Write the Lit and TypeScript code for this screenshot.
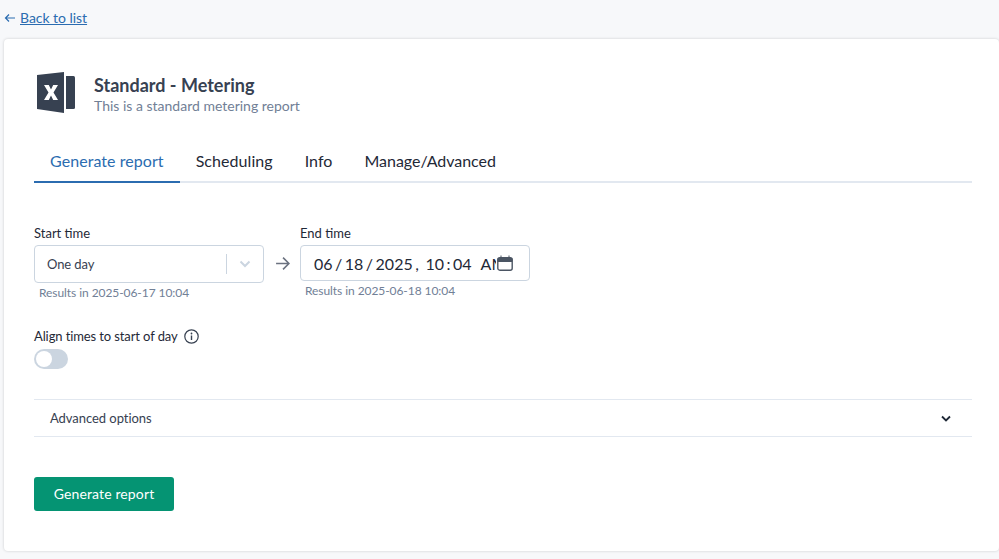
import { LitElement, html, css } from "lit";
import { customElement } from "lit/decorators.js";

@customElement("app-root")
export class AppRoot extends LitElement {
  static styles = css`
    :host { display: block; height: 559px; overflow: hidden; background: #f7f8fa; font-family: Lato, sans-serif; color: #1f2937; box-sizing: border-box; padding: 9px 0 0 4px; }
    * { box-sizing: border-box; }
    .back { display: flex; align-items: center; height: 18px; font-size: 14px; color: #2b6cb0; line-height: 18px; letter-spacing: -.04px; }
    .back svg { width: 12px; height: 10px; margin-right: 4px; }
    .back a { color: inherit; text-decoration: underline; }
    .card { margin-top: 12px; height: 512px; background: #fff; border-radius: 4px; box-shadow: 0 0 3px rgba(0,0,0,.18); padding: 30px 27px 0 30px; }
    .head { display: flex; align-items: center; height: 46px; margin-top: 1px; }
    .logo { width: 38px; height: 42px; margin: 0 19px 0 3px; }
    .titles { padding-top: 4px; }
    h1 { margin: 0; font-size: 18px; line-height: 22px; font-weight: 700; color: #374151; }
    .sub { font-size: 14px; line-height: 20px; color: #718096; }
    .tabs { display: flex; margin-top: 26px; height: 41px; border-bottom: 2px solid #e2e8f0; }
    .tab { padding: 0 16px; height: 41px; font-size: 16px; line-height: 38px; color: #1f2937; letter-spacing: .06px; }
    .tab:last-child { letter-spacing: -.03px; }
    .tab.on { color: #2b6cb0; border-bottom: 2px solid #2b6cb0; }
    .times { display: flex; margin-top: 41px; }
    .field { display: flex; flex-direction: column; }
    label { font-size: 13px; line-height: 18px; color: #1f2937; }
    .select { width: 230px; height: 38px; margin-top: 3px; border: 1px solid #cbd5e0; border-radius: 4px; display: flex; align-items: center; padding-left: 12px; font-size: 13px; letter-spacing: -.1px; color: #374151; }
    .select span { flex: 1; }
    .sep { width: 1px; height: 20px; background: #cbd5e0; }
    .select svg { width: 12px; height: 8px; margin: 0 12px 0 12px; }
    .hint { font-size: 12px; line-height: 16px; letter-spacing: -.07px; color: #718096; margin: 2px 0 0 5px; }
    .arrow { width: 36px; height: 37px; margin-top: 21px; display: flex; align-items: center; justify-content: center; }
    .arrow svg { width: 15px; height: 15px; }
    input { width: 230px; height: 36px; margin-top: 3px; border: 1px solid #cbd5e0; border-radius: 4px; padding: 0 12px; font-family: Lato, sans-serif; font-size: 16px; color: #1f2937; background: #fff; outline: none; }
    input::-webkit-datetime-edit { max-width: 183px; overflow: hidden; }
    input::-webkit-datetime-edit-text { padding: 0 1.5px; }
    input::-webkit-calendar-picker-indicator { width: 16px; height: 16px; padding: 0; margin: 0 0 0 1px; background: url("data:image/svg+xml,%3Csvg xmlns='http://www.w3.org/2000/svg' viewBox='0 0 16 16'%3E%3Crect x='.8' y='2.800' width='14.400' height='12.400' rx='2' fill='none' stroke='%234b5563' stroke-width='1.400'/%3E%3Cpath d='M1 3.500h14V6.500H1ZM4 .5v3M12 .5v3' fill='%234b5563' stroke='%234b5563'/%3E%3C/svg%3E") center / contain no-repeat; }
    .align { margin-top: 26px; display: flex; align-items: center; height: 18px; font-size: 13px; letter-spacing: -.11px; }
    .align svg { width: 15px; height: 15px; margin-left: 6px; }
    .toggle { margin-top: 4px; width: 34px; height: 20px; border-radius: 10px; background: #cbd5e0; position: relative; }
    .toggle::after { content: ""; position: absolute; left: 2px; top: 2px; width: 16px; height: 16px; border-radius: 50%; background: #fff; }
    .adv { margin-top: 30px; height: 38px; border-top: 1px solid #e2e8f0; border-bottom: 1px solid #e2e8f0; display: flex; align-items: center; justify-content: space-between; padding: 0 21px 0 16px; font-size: 13px; letter-spacing: -.05px; color: #374151; }
    .adv svg { width: 10px; height: 7px; }
    button { display: block; margin-top: 40px; width: 140px; height: 34px; border: 0; border-radius: 3px; background: #059473; color: #fff; font-family: Lato, sans-serif; font-size: 14px; letter-spacing: .13px; padding: 0 0 2px; }
  `;

  render() {
    return html`
      <div class="back">
        <svg viewBox="0 0 12 10"><path d="M11 5H1.5M5 1.5 1.5 5 5 8.500" fill="none" stroke="#2b6cb0" stroke-width="1.200"/></svg>
        <a href="#">Back to list</a>
      </div>
      <div class="card">
        <div class="head">
          <svg class="logo" viewBox="0 0 38 42">
            <path d="M0 3 27 0V41L0 37Z" fill="#374151"/>
            <path d="M29 4h7.500a1.500 1.500 0 0 1 1.500 1.500v30a1.500 1.500 0 0 1-1.500 1.500H29Z" fill="#374151"/>
            <path d="M7 13h4.800l2.200 4.500L16.200 13H21l-4.500 7.500L21 28h-4.800L14 23.500 11.800 28H7l4.500-7.500Z" fill="#fff"/>
          </svg>
          <div class="titles">
            <h1>Standard - Metering</h1>
            <div class="sub">This is a standard metering report</div>
          </div>
        </div>
        <div class="tabs">
          <div class="tab on">Generate report</div>
          <div class="tab">Scheduling</div>
          <div class="tab">Info</div>
          <div class="tab">Manage/Advanced</div>
        </div>
        <div class="times">
          <div class="field">
            <label>Start time</label>
            <div class="select">
              <span>One day</span>
              <i class="sep"></i>
              <svg viewBox="0 0 12 8"><path d="M1.500 1.500 6 6l4.500-4.500" fill="none" stroke="#cbd5e0" stroke-width="2"/></svg>
            </div>
            <div class="hint">Results in 2025-06-17 10:04</div>
          </div>
          <div class="arrow">
            <svg viewBox="0 0 14 14"><path d="M1 7h12M7.500 1.500 13 7l-5.500 5.500" fill="none" stroke="#6b7280" stroke-width="1.500"/></svg>
          </div>
          <div class="field">
            <label>End time</label>
            <input type="datetime-local" value="2025-06-18T10:04" />
            <div class="hint">Results in 2025-06-18 10:04</div>
          </div>
        </div>
        <div class="align">
          Align times to start of day
          <svg viewBox="0 0 15 15"><circle cx="7.500" cy="7.500" r="6.700" fill="none" stroke="#374151" stroke-width="1.200"/><path d="M7.500 6.500V11" stroke="#374151" stroke-width="1.400"/><circle cx="7.500" cy="4.500" r=".9" fill="#374151"/></svg>
        </div>
        <div class="toggle"></div>
        <div class="adv">
          <span>Advanced options</span>
          <svg viewBox="0 0 10 7"><path d="M1 1.500 5 5.500l4-4" fill="none" stroke="#1f2937" stroke-width="1.800"/></svg>
        </div>
        <button>Generate report</button>
      </div>
    `;
  }
}
